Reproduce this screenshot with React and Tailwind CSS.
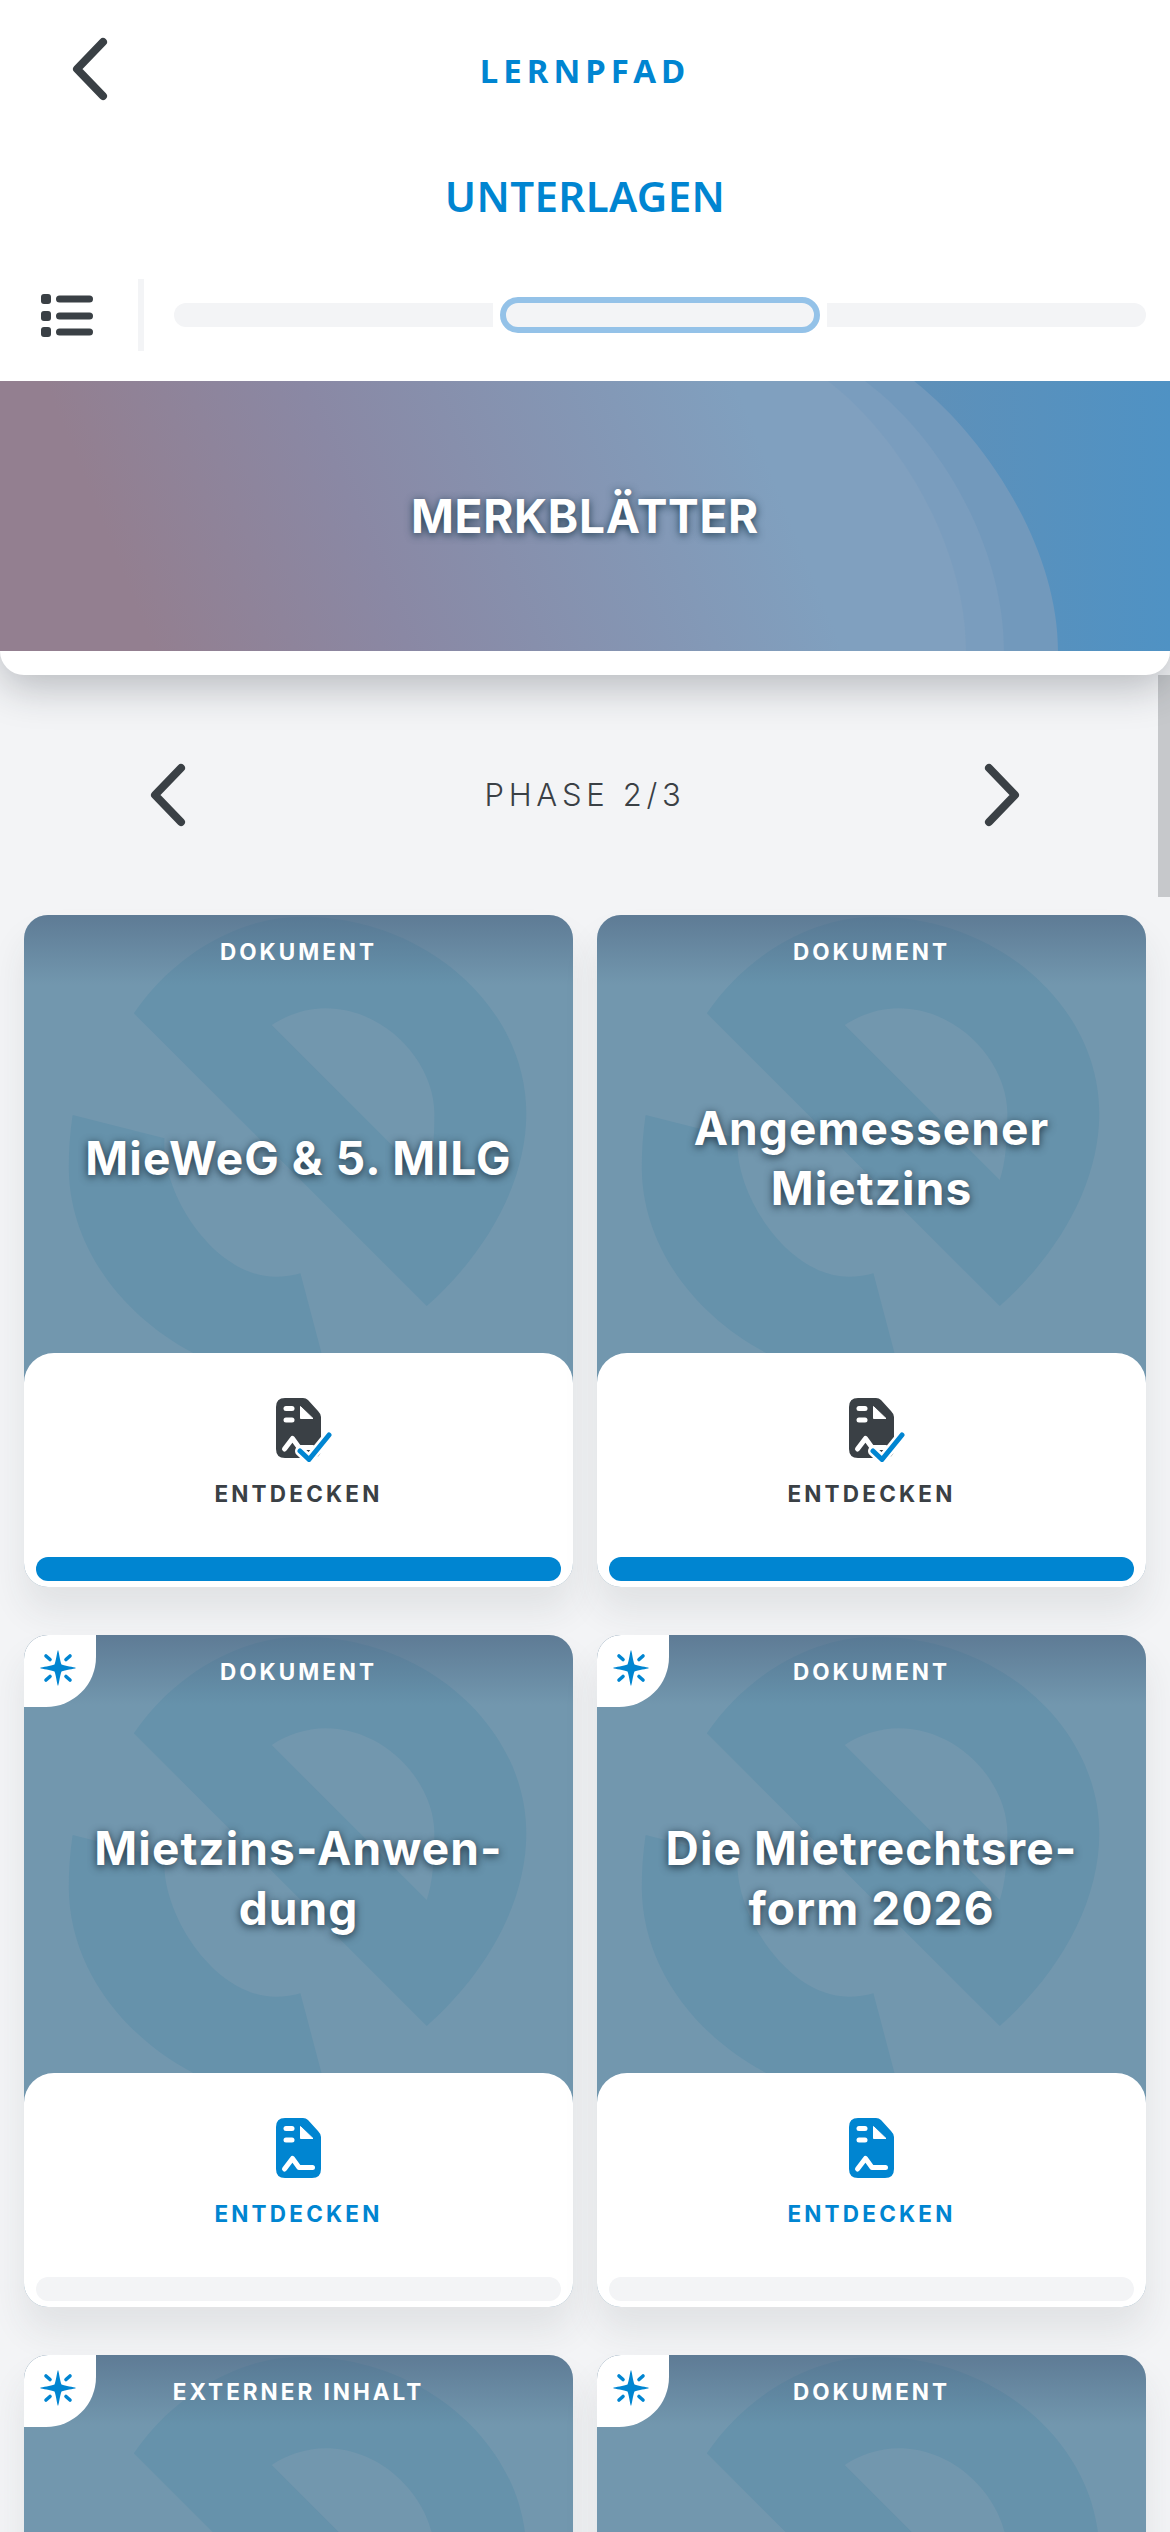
import React from "react";

const cards = [
  { label: "DOKUMENT", title: ["MieWeG & 5. MILG"], done: true },
  { label: "DOKUMENT", title: ["Angemessener", "Mietzins"], done: true },
  { label: "DOKUMENT", title: ["Mietzins-Anwen-", "dung"], isNew: true },
  { label: "DOKUMENT", title: ["Die Mietrechtsre-", "form 2026"], isNew: true },
  // last row runs off the bottom of the screen
  { label: "EXTERNER INHALT", title: [], isNew: true },
  { label: "DOKUMENT", title: [], isNew: true },
];

const Chevron = ({ dir = "left" }) => (
  <svg width="36" height="64" viewBox="0 0 36 64" fill="none">
    <path
      d={dir === "left" ? "M31 5 L5 32 L31 59" : "M5 5 L31 32 L5 59"}
      stroke="#3a4045"
      strokeWidth="8"
      strokeLinecap="round"
      strokeLinejoin="round"
    />
  </svg>
);

const ListIcon = () => (
  <svg width="52" height="45" viewBox="0 0 52 45" fill="#3a4045">
    <rect x="0" y="1" width="10" height="10" rx="3" />
    <rect x="15" y="2.5" width="37" height="7" rx="3.5" />
    <rect x="0" y="18" width="10" height="10" rx="3" />
    <rect x="15" y="19.5" width="37" height="7" rx="3.5" />
    <rect x="0" y="34" width="10" height="10" rx="3" />
    <rect x="15" y="35.5" width="37" height="7" rx="3.5" />
  </svg>
);

const DocIcon = ({ done }) => (
  <svg width="56" height="64" viewBox="0 0 56 64" className="ml-[11px]">
    <path
      d="M9 0H27Q30 0 32 2L42 13Q45 16 45 19V51Q45 60 36 60H9Q0 60 0 51V9Q0 0 9 0Z"
      fill={done ? "#3a4045" : "#0085d1"}
    />
    <rect x="7.5" y="8" width="11" height="5" rx="2.5" fill="#fff" />
    <rect x="7.5" y="19.5" width="11" height="5" rx="2.5" fill="#fff" />
    <path d="M24.5 8.5L37 20.5H24.5Z" fill="#fff" stroke="#fff" strokeLinejoin="round" />
    <path
      d="M8.5 51L16.5 40.5L23 49.5H36.5"
      fill="none"
      stroke="#fff"
      strokeWidth="5"
      strokeLinecap="round"
      strokeLinejoin="round"
    />
    {done && (
      <>
        <path d="M24 53L33 61.5L53 37" fill="none" stroke="#fff" strokeWidth="10" strokeLinecap="round" />
        <path d="M24 53L33 61.5L53 37" fill="none" stroke="#0085d1" strokeWidth="5" strokeLinecap="round" strokeLinejoin="round" />
      </>
    )}
  </svg>
);

const StarIcon = () => (
  <svg width="36" height="36" viewBox="0 0 36 36" fill="#0085d1">
    <path d="M18 0C19 2 20 11 21.5 14.5C25 16 34 17 36 18C34 19 25 20 21.5 21.5C20 25 19 34 18 36C17 34 16 25 14.5 21.5C11 20 2 19 0 18C2 17 11 16 14.5 14.5C16 11 17 2 18 0Z" />
    <g stroke="#0085d1" strokeWidth="3.6" strokeLinecap="round">
      <path d="M6 6L10 9.5" />
      <path d="M30 6L26 9.5" />
      <path d="M6 30L10 26.5" />
      <path d="M30 30L26 26.5" />
    </g>
  </svg>
);

// watermark logo behind the card title, traced from the reference
const Watermark = () => (
  <svg
    className="absolute inset-0 w-full h-full"
    viewBox="63 45 1434 1314"
    preserveAspectRatio="none"
    fill="#6692ab"
  >
    <path
      fillRule="evenodd"
      d="M350 340C450 170 620 50 790 50C1110 50 1375 320 1375 640C1375 850 1270 1060 1115 1218ZM710 375C750 345 800 325 850 325C1010 325 1135 490 1135 640C1135 720 1130 790 1115 840Z"
    />
    <path d="M190 645L430 715C420 880 560 1130 720 1130C745 1130 765 1127 785 1120L840 1359H505C310 1240 180 1030 180 800C180 750 183 700 190 645Z" />
  </svg>
);

const Card = ({ card }) => (
  <div className="relative h-[672px] rounded-[24px] overflow-hidden bg-[#7297ae] shadow-[0_24px_36px_rgba(40,50,60,0.09)]">
    <div className="relative h-[438px] flex flex-col text-white">
      <Watermark />
      <div className="absolute inset-x-0 top-0 h-[70px] bg-gradient-to-b from-[#4a5f7c]/50 to-transparent" />
      {card.isNew && (
        <div className="absolute left-0 top-0 w-[72px] h-[72px] bg-white rounded-br-[50px] flex items-center justify-center pr-[5px] pb-[6px]">
          <StarIcon />
        </div>
      )}
      <div className="relative pt-[26px] text-center text-[22.5px] leading-[22px] font-bold tracking-[3px]">
        {card.label}
      </div>
      <div className="relative flex-1 flex flex-col items-center justify-center text-center font-bold text-[46px] tracking-[1.1px] leading-[60px] [text-shadow:0_2px_9px_rgba(30,50,65,1)]">
        {card.title.map((line) => (
          <div key={line}>{line}</div>
        ))}
      </div>
    </div>
    {card.title.length > 0 && (
      <div className="h-[234px] bg-white rounded-t-[30px] flex flex-col items-center px-3">
        <div className="mt-[45px]">
          <DocIcon done={card.done} />
        </div>
        <div
          className={`mt-[18px] text-[22.5px] leading-[28px] font-bold tracking-[3.2px] ${
            card.done ? "text-[#3a4045]" : "text-[#0085d1]"
          }`}
        >
          ENTDECKEN
        </div>
        <div
          className={`mt-auto mb-[6px] w-full h-[24px] rounded-full ${
            card.done ? "bg-[#0085d1]" : "bg-[#f3f4f6]"
          }`}
        />
      </div>
    )}
  </div>
);

export default function App() {
  return (
    <div className="relative w-[1170px] h-[2532px] overflow-hidden bg-[#f3f4f6] font-['Inter',sans-serif]">
      {/* Header */}
      <div className="relative z-10 bg-white rounded-b-[24px] shadow-[0_12px_40px_rgba(30,35,45,0.28)]">
        <div className="h-[142px] grid grid-cols-[1fr_auto_1fr] items-center pl-[72px]">
          <div className="-mt-[5px]">
            <Chevron />
          </div>
          <div className="-ml-[72px] text-[#0085d1] text-[33px] font-bold tracking-[5px] font-['Noto_Sans',sans-serif]">
            LERNPFAD
          </div>
          <div />
        </div>
        <div className="h-[110px] pb-[3px] flex items-center justify-center text-[#0085d1] text-[42px] font-semibold tracking-[0.4px] font-['Noto_Sans',sans-serif]">
          UNTERLAGEN
        </div>
        <div className="h-[129px] pt-[27px] pl-[41px] pr-[24px]">
          <div className="h-[72px] flex items-center">
            <ListIcon />
            <div className="ml-[45px] w-[6px] h-[72px] bg-[#f3f4f6]" />
            <div className="ml-[30px] flex-1 grid grid-cols-3 items-center gap-[7px]">
              <div className="h-[24px] bg-[#f3f4f6] rounded-l-full" />
              <div className="h-[36px] bg-[#f3f4f6] rounded-[18px] border-[6px] border-[#94c2e8]" />
              <div className="h-[24px] bg-[#f3f4f6] rounded-r-full" />
            </div>
          </div>
        </div>
        {/* Hero */}
        <div className="relative h-[270px] flex items-center justify-center bg-[linear-gradient(68deg,#937f90_12%,#8a88a4_32%,#80a0bf_66%)] overflow-hidden">
          <svg className="absolute inset-0" width="1170" height="270" viewBox="0 0 1170 270">
            <defs>
              <linearGradient id="heroEdge" x1="0" y1="0" x2="1" y2="0">
                <stop offset="0" stopColor="#5f90b8" />
                <stop offset="1" stopColor="#4f92c4" />
              </linearGradient>
            </defs>
            <path d="M828 0C905 60 966 170 966 270H1170V0Z" fill="#6c98bd" opacity="0.3" />
            <path d="M865 0C945 60 1004 170 1004 270H1170V0Z" fill="#6894bb" opacity="0.45" />
            <path d="M914 0C990 60 1058 170 1058 270H1170V0Z" fill="url(#heroEdge)" />
          </svg>
          <h1 className="relative text-white text-[46px] font-bold tracking-[0.7px] [text-shadow:0_2px_9px_rgba(30,60,80,1)]">
            MERKBLÄTTER
          </h1>
        </div>
        <div className="h-[24px]" />
      </div>

      {/* Scrollbar */}
      <div className="absolute right-0 top-[675px] w-[12px] h-[222px] bg-[#c6c8cb]" />

      {/* Phase nav */}
      <div className="flex items-center justify-between px-[150px] py-[88px]">
        <Chevron />
        <div className="text-[#3a4045] text-[31px] font-light tracking-[4.7px]">PHASE 2/3</div>
        <Chevron dir="right" />
      </div>

      {/* Cards */}
      <div className="grid grid-cols-2 gap-x-6 gap-y-12 px-6">
        {cards.map((card, i) => (
          <Card key={i} card={card} />
        ))}
      </div>
    </div>
  );
}
